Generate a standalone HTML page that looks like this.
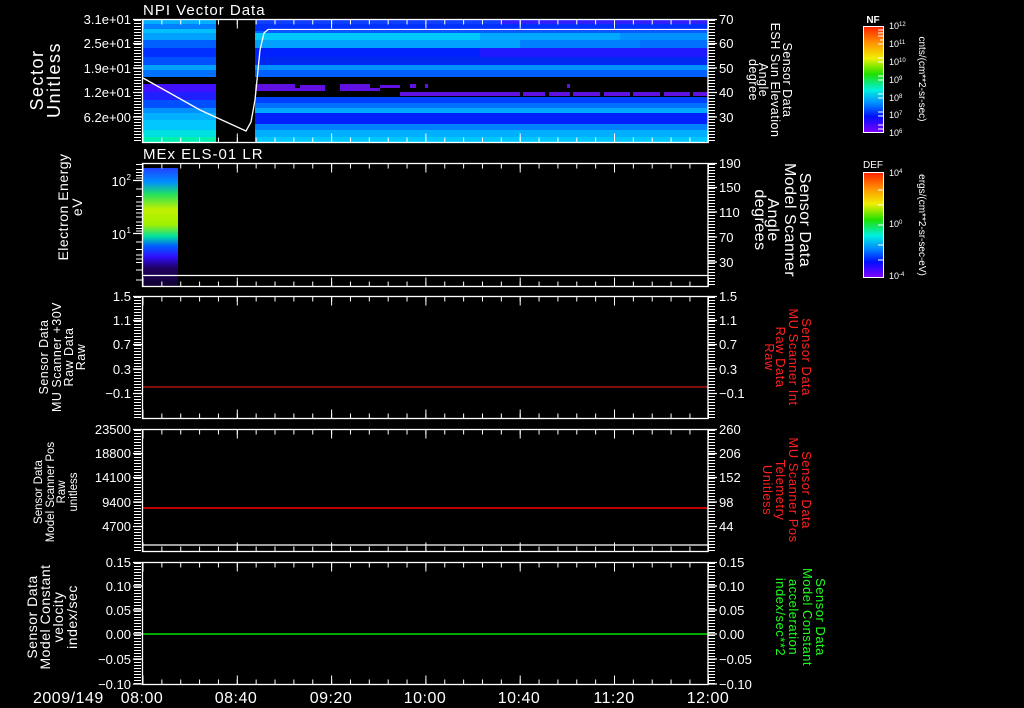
<!DOCTYPE html>
<html><head><meta charset="utf-8"><style>
html,body{margin:0;padding:0;background:#000;width:1024px;height:708px;overflow:hidden}
svg{display:block}
text{font-family:"Liberation Sans",sans-serif}
.w text,text.w{fill:#fff}
.r text{fill:#ff2020}
.g text{fill:#20ff20}
</style></head><body>
<svg width="1024" height="708" viewBox="0 0 1024 708" xmlns="http://www.w3.org/2000/svg">
<defs>
<linearGradient id="cb" x1="0" y1="0" x2="0" y2="1">
<stop offset="0" stop-color="#ff2000"/><stop offset="0.15" stop-color="#ff9000"/><stop offset="0.3" stop-color="#f0f000"/><stop offset="0.45" stop-color="#20e000"/><stop offset="0.6" stop-color="#00f0e0"/><stop offset="0.72" stop-color="#0090ff"/><stop offset="0.85" stop-color="#0010ff"/><stop offset="1" stop-color="#8000ff"/>
</linearGradient>
<linearGradient id="sp2" x1="0" y1="0" x2="0" y2="1">
<stop offset="0" stop-color="#2040ff"/><stop offset="0.12" stop-color="#0090ff"/><stop offset="0.22" stop-color="#20e060"/><stop offset="0.35" stop-color="#c0f000"/><stop offset="0.48" stop-color="#a0f000"/><stop offset="0.58" stop-color="#00e0a0"/><stop offset="0.66" stop-color="#0060ff"/><stop offset="0.75" stop-color="#3010ff"/><stop offset="0.85" stop-color="#200060"/><stop offset="1" stop-color="#100030"/>
</linearGradient>
</defs>

<g shape-rendering="crispEdges">
<rect x="142" y="19" width="74" height="5" fill="#00b0ff"/>
<rect x="142" y="24" width="74" height="5" fill="#0080ff"/>
<rect x="142" y="29" width="74" height="4" fill="#00c0ff"/>
<rect x="142" y="33" width="74" height="7" fill="#00a0ff"/>
<rect x="142" y="40" width="74" height="8" fill="#0060ff"/>
<rect x="142" y="48" width="74" height="9" fill="#0030ff"/>
<rect x="142" y="57" width="74" height="8" fill="#0050ff"/>
<rect x="142" y="65" width="74" height="5" fill="#00a0ff"/>
<rect x="142" y="70" width="74" height="7" fill="#0070ff"/>
<rect x="142" y="84" width="74" height="8" fill="#4010ff"/>
<rect x="142" y="92" width="74" height="8" fill="#2020ff"/>
<rect x="142" y="100" width="74" height="8" fill="#0050ff"/>
<rect x="142" y="108" width="74" height="5" fill="#0090ff"/>
<rect x="142" y="113" width="74" height="7" fill="#00b0ff"/>
<rect x="142" y="120" width="74" height="10" fill="#00c8ff"/>
<rect x="142" y="130" width="74" height="7" fill="#00e0e0"/>
<rect x="142" y="137" width="74" height="5" fill="#00f0b0"/>

<rect x="255" y="19" width="453" height="5" fill="#1040ff"/>
<rect x="500" y="19" width="208" height="5" fill="#3020ff"/>
<rect x="255" y="24" width="453" height="7" fill="#0030ff"/>
<rect x="255" y="31" width="453" height="2" fill="#0060ff"/>
<rect x="255" y="33" width="453" height="7" fill="#00c8ff"/>
<rect x="480" y="33" width="228" height="7" fill="#00a8ff"/>
<rect x="620" y="33" width="88" height="7" fill="#0090ff"/>
<rect x="255" y="40" width="453" height="8" fill="#00a0ff"/>
<rect x="520" y="40" width="188" height="8" fill="#0080ff"/>
<rect x="640" y="40" width="68" height="8" fill="#0070ff"/>
<rect x="255" y="48" width="453" height="9" fill="#0020ff"/>
<rect x="480" y="48" width="228" height="9" fill="#2018ff"/>
<rect x="255" y="57" width="453" height="8" fill="#0028f0"/>
<rect x="255" y="65" width="453" height="5" fill="#0090ff"/>
<rect x="255" y="70" width="453" height="7" fill="#0060ff"/>
<g fill="#6010e0">
<rect x="255" y="84" width="40" height="4"/><rect x="300" y="85" width="25" height="3"/><rect x="340" y="84" width="30" height="4"/><rect x="380" y="85" width="20" height="3"/><rect x="410" y="84" width="6" height="4"/><rect x="425" y="84" width="3" height="4"/><rect x="567" y="84" width="3" height="4"/>
<rect x="255" y="88" width="70" height="3"/><rect x="340" y="88" width="40" height="3"/>
<rect x="400" y="92" width="308" height="4"/>
</g>
<g fill="#000"><rect x="520" y="92" width="3" height="4"/><rect x="545" y="92" width="4" height="4"/><rect x="570" y="92" width="3" height="4"/><rect x="600" y="92" width="4" height="4"/><rect x="630" y="92" width="3" height="4"/><rect x="660" y="92" width="4" height="4"/><rect x="690" y="92" width="3" height="4"/></g>
<rect x="255" y="97" width="453" height="6" fill="#0040ff"/>
<rect x="255" y="103" width="453" height="5" fill="#0070ff"/>
<rect x="255" y="108" width="453" height="5" fill="#00a8ff"/>
<rect x="255" y="113" width="453" height="11" fill="#0020ff"/>
<rect x="255" y="124" width="453" height="6" fill="#0080ff"/>
<rect x="255" y="130" width="453" height="7" fill="#00b0ff"/>
<rect x="255" y="137" width="453" height="5" fill="#00c8ff"/>
</g>
<polyline points="143,78 200,110 246,131 251,122 255,100 260,50 264,33 268,29.5 708,29.5" fill="none" stroke="#fff" stroke-width="1.3"/>

<rect x="143" y="168" width="35" height="118" fill="url(#sp2)"/>
<line x1="142" y1="275.5" x2="708" y2="275.5" stroke="#fff" stroke-width="1.3"/>

<line x1="142" y1="387" x2="708" y2="387" stroke="#ff2020" stroke-width="1"/>
<line x1="142" y1="508" x2="708" y2="508" stroke="#ff0000" stroke-width="1.5"/>
<line x1="142" y1="634" x2="708" y2="634" stroke="#00e000" stroke-width="1.5"/>
<line x1="142" y1="545" x2="708" y2="545" stroke="#fff" stroke-width="1.3"/>

<g stroke="#fff" fill="none">
<rect x="142.5" y="19.5" width="565.5" height="123" stroke-width="1.3"/>
<rect x="142.5" y="163.5" width="565.5" height="123" stroke-width="1.3"/>
<rect x="142.5" y="296.5" width="565.5" height="122" stroke-width="1.3"/>
<rect x="142.5" y="429.5" width="565.5" height="122" stroke-width="1.3"/>
<rect x="142.5" y="562.5" width="565.5" height="122" stroke-width="1.3"/>
<g stroke-width="1" stroke-dasharray="1 17.86">
<line x1="142.5" y1="22" x2="708" y2="22" stroke-width="5"/>
<line x1="142.5" y1="140" x2="708" y2="140" stroke-width="5"/>
<line x1="142.5" y1="166" x2="708" y2="166" stroke-width="5"/>
<line x1="142.5" y1="284" x2="708" y2="284" stroke-width="5"/>
<line x1="142.5" y1="299" x2="708" y2="299" stroke-width="5"/>
<line x1="142.5" y1="416" x2="708" y2="416" stroke-width="5"/>
<line x1="142.5" y1="432" x2="708" y2="432" stroke-width="5"/>
<line x1="142.5" y1="549" x2="708" y2="549" stroke-width="5"/>
<line x1="142.5" y1="565" x2="708" y2="565" stroke-width="5"/>
<line x1="142.5" y1="682" x2="708" y2="682" stroke-width="5"/>
</g>
<g stroke-dasharray="1 93.3" stroke-width="9">
<line x1="142.5" y1="24" x2="709" y2="24"/>
<line x1="142.5" y1="138" x2="709" y2="138"/>
<line x1="142.5" y1="168" x2="709" y2="168"/>
<line x1="142.5" y1="282" x2="709" y2="282"/>
<line x1="142.5" y1="301" x2="709" y2="301"/>
<line x1="142.5" y1="414" x2="709" y2="414"/>
<line x1="142.5" y1="434" x2="709" y2="434"/>
<line x1="142.5" y1="547" x2="709" y2="547"/>
<line x1="142.5" y1="567" x2="709" y2="567"/>
<line x1="142.5" y1="680" x2="709" y2="680"/>
</g>
<g stroke-width="7" stroke-dasharray="1 2">
<line x1="137.5" y1="20" x2="137.5" y2="142"/>
<line x1="711.5" y1="20" x2="711.5" y2="142"/>
<line x1="711.5" y1="164" x2="711.5" y2="286"/>
<line x1="137.5" y1="297" x2="137.5" y2="418"/>
<line x1="711.5" y1="297" x2="711.5" y2="418"/>
<line x1="137.5" y1="430" x2="137.5" y2="551"/>
<line x1="711.5" y1="430" x2="711.5" y2="551"/>
<line x1="137.5" y1="563" x2="137.5" y2="684"/>
<line x1="711.5" y1="563" x2="711.5" y2="684"/>
</g>
<path stroke-width="1" d="M136 164.5H142M136 169.5H142M136 172.5H142M136 175.5H142M136 178H142M136 189H142M136 196.5H142M136 202H142M136 206H142M136 209.5H142M136 213H142M136 217H142M136 222H142M136 225.5H142M136 228.5H142M136 231H142M136 242H142M136 249.5H142M136 255H142M136 259H142M136 262.5H142M136 270H142M136 280H142"/>
<g stroke-width="1.3">
<path d="M133 19.5H142M133 43.5H142M133 68H142M133 92.5H142M133 117H142M708 19.5H717M708 43.5H717M708 68H717M708 92.5H717M708 117H717"/>
<path d="M133 180.5H142M133 233.5H142M708 163.5H717M708 187.5H717M708 212H717M708 237H717M708 262H717"/>
<path d="M133 296.5H142M133 320.5H142M133 344.5H142M133 369H142M133 393.5H142M708 296.5H717M708 320.5H717M708 344.5H717M708 369H717M708 393.5H717"/>
<path d="M133 429.5H142M133 453.5H142M133 477.5H142M133 502H142M133 526.5H142M708 429.5H717M708 453.5H717M708 477.5H717M708 502H717M708 526.5H717"/>
<path d="M133 562.5H142M133 586H142M133 610H142M133 634H142M133 659H142M133 684H142M708 562.5H717M708 586H717M708 610H717M708 634H717M708 659H717M708 684H717"/>
</g>
</g>

<g class="w">
<text x="143" y="15" font-size="15" letter-spacing="1">NPI Vector Data</text>
<text x="143" y="159" font-size="15" letter-spacing="1">MEx ELS-01 LR</text>

<g font-size="13" text-anchor="end">
<text x="131" y="24">3.1e+01</text><text x="131" y="48">2.5e+01</text><text x="131" y="73">1.9e+01</text><text x="131" y="97">1.2e+01</text><text x="131" y="122">6.2e+00</text>
<text x="126" y="186">10</text><text x="131" y="180" font-size="8">2</text>
<text x="126" y="239">10</text><text x="131" y="233" font-size="8">1</text>
<text x="131" y="301">1.5</text><text x="131" y="325">1.1</text><text x="131" y="349">0.7</text><text x="131" y="374">0.3</text><text x="131" y="398">−0.1</text>
<text x="131" y="434">23500</text><text x="131" y="458">18800</text><text x="131" y="482">14100</text><text x="131" y="507">9400</text><text x="131" y="531">4700</text>
<text x="131" y="567">0.15</text><text x="131" y="591">0.10</text><text x="131" y="615">0.05</text><text x="131" y="639">0.00</text><text x="131" y="664">−0.05</text><text x="131" y="689">−0.10</text>
</g>
<g font-size="13">
<text x="719" y="24">70</text><text x="719" y="48">60</text><text x="719" y="73">50</text><text x="719" y="97">40</text><text x="719" y="122">30</text>
<text x="719" y="168">190</text><text x="719" y="192">150</text><text x="719" y="217">110</text><text x="719" y="242">70</text><text x="719" y="267">30</text>
<text x="719" y="301">1.5</text><text x="719" y="325">1.1</text><text x="719" y="349">0.7</text><text x="719" y="374">0.3</text><text x="719" y="398">−0.1</text>
<text x="719" y="434">260</text><text x="719" y="458">206</text><text x="719" y="482">152</text><text x="719" y="507">98</text><text x="719" y="531">44</text>
<text x="719" y="567">0.15</text><text x="719" y="591">0.10</text><text x="719" y="615">0.05</text><text x="719" y="639">0.00</text><text x="719" y="664">−0.05</text><text x="719" y="689">−0.10</text>
</g>

<g text-anchor="middle">
<g transform="translate(0,80) rotate(-90)" font-size="18" letter-spacing="1.5"><text x="0" y="43">Sector</text><text x="0" y="60">Unitless</text></g>
<g transform="translate(0,207) rotate(-90)" font-size="14" letter-spacing="0.5"><text x="0" y="68">Electron Energy</text><text x="0" y="82">eV</text></g>
<g transform="translate(0,357) rotate(-90)" font-size="12.5" letter-spacing="0.5"><text x="0" y="48">Sensor Data</text><text x="0" y="61">MU Scanner +30V</text><text x="0" y="73">Raw Data</text><text x="0" y="85">Raw</text></g>
<g transform="translate(0,492) rotate(-90)" font-size="11.5"><text x="0" y="42">Sensor Data</text><text x="0" y="54">Model Scanner Pos</text><text x="0" y="65">Raw</text><text x="0" y="77">unitless</text></g>
<g transform="translate(0,617) rotate(-90)" font-size="14" letter-spacing="0.5"><text x="0" y="37">Sensor Data</text><text x="0" y="50">Model Constant</text><text x="0" y="63">velocity</text><text x="0" y="77">index/sec</text></g>
<g transform="translate(0,80) rotate(90)" font-size="12.5" letter-spacing="0.5"><text x="0" y="-783">Sensor Data</text><text x="0" y="-771">ESH Sun Elevation</text><text x="0" y="-759">Angle</text><text x="0" y="-749">degree</text></g>
<g transform="translate(0,220) rotate(90)" font-size="16" letter-spacing="0.5"><text x="0" y="-800">Sensor Data</text><text x="0" y="-785">Model Scanner</text><text x="0" y="-768">Angle</text><text x="0" y="-755">degrees</text></g>
</g>
</g>

<g text-anchor="middle">
<g class="r" transform="translate(0,357) rotate(90)" font-size="13" letter-spacing="0.5"><text x="0" y="-802">Sensor Data</text><text x="0" y="-789">MU Scanner Int</text><text x="0" y="-776">Raw Data</text><text x="0" y="-765">Raw</text></g>
<g class="r" transform="translate(0,490) rotate(90)" font-size="13" letter-spacing="0.5"><text x="0" y="-802">Sensor Data</text><text x="0" y="-789">MU Scanner Pos</text><text x="0" y="-776">Telemetry</text><text x="0" y="-763">Unitless</text></g>
<g class="g" transform="translate(0,617) rotate(90)" font-size="13" letter-spacing="0.5"><text x="0" y="-816">Sensor Data</text><text x="0" y="-803">Model Constant</text><text x="0" y="-789">acceleration</text><text x="0" y="-776">index/sec**2</text></g>
</g>

<rect x="863.5" y="26.5" width="20" height="106" fill="url(#cb)" stroke="#fff" stroke-width="1"/>
<rect x="863.5" y="172.5" width="20" height="105" fill="url(#cb)" stroke="#fff" stroke-width="1"/>
<g stroke="#fff" stroke-width="1">
<path d="M878 30H883M878 33H883M878 36H883M880 40H883M878 44H883M878 58H883M878 62H883M878 76H883M878 80H883M878 94H883M878 98H883M878 112H883M878 116H883M878 125H883M878 129H883"/>
<path d="M878 190H883M878 205H883M878 225H883M878 245H883M878 260H883"/>
</g>
<g class="w">
<text x="873" y="23" font-size="10" text-anchor="middle" font-weight="bold">NF</text>
<text x="873" y="168" font-size="10" text-anchor="middle">DEF</text>
<g font-size="9">
<text x="889" y="29">10<tspan font-size="6" dy="-3">12</tspan></text>
<text x="889" y="47">10<tspan font-size="6" dy="-3">11</tspan></text>
<text x="889" y="65">10<tspan font-size="6" dy="-3">10</tspan></text>
<text x="889" y="83">10<tspan font-size="6" dy="-3">9</tspan></text>
<text x="889" y="101">10<tspan font-size="6" dy="-3">8</tspan></text>
<text x="889" y="118">10<tspan font-size="6" dy="-3">7</tspan></text>
<text x="889" y="136">10<tspan font-size="6" dy="-3">6</tspan></text>
<text x="889" y="176">10<tspan font-size="6" dy="-3">4</tspan></text>
<text x="889" y="227">10<tspan font-size="6" dy="-3">0</tspan></text>
<text x="889" y="279">10<tspan font-size="6" dy="-3">-4</tspan></text>
</g>
<g font-size="10" text-anchor="middle">
<text transform="translate(919,79) rotate(90)" x="0" y="0">cnts/(cm**2-sr-sec)</text>
<text transform="translate(919,225) rotate(90)" x="0" y="0">ergs/(cm**2-sr-sec-eV)</text>
</g>

<g font-size="16" letter-spacing="0.5">
<text x="33" y="703">2009/149</text>
<g text-anchor="middle">
<text x="142" y="703">08:00</text><text x="236" y="703">08:40</text><text x="331" y="703">09:20</text><text x="425" y="703">10:00</text><text x="519" y="703">10:40</text><text x="614" y="703">11:20</text><text x="708" y="703">12:00</text>
</g>
</g>
</g>
</svg>
</body></html>
